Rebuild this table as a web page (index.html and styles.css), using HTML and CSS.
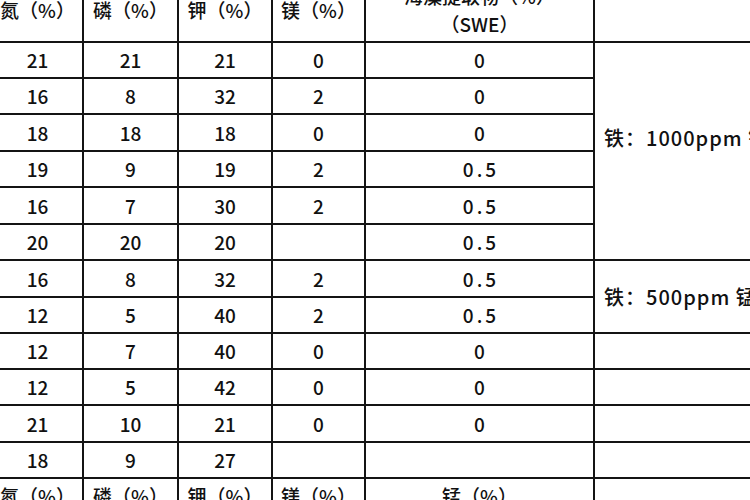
FILE: index.html
```html
<!DOCTYPE html>
<html lang="zh">
<head>
<meta charset="utf-8">
<title>肥料配方表</title>
<link rel="stylesheet" href="styles.css">
</head>
<body>
<div class="sheet">
<table class="grid">
<colgroup><col class="c0"><col class="c1"><col class="c2"><col class="c3"><col class="c4"><col class="c5"></colgroup>
<tr class="head"><th>氮（%）</th><th>磷（%）</th><th>钾（%）</th><th>镁（%）</th><th>海藻提取物（%）<br>（SWE）</th><th></th></tr>
<tr class="h36"><td>21</td><td>21</td><td>21</td><td>0</td><td>0</td><td rowspan="6" class="note note-top">铁：1000ppm 锰</td></tr>
<tr class="h36"><td>16</td><td>8</td><td>32</td><td>2</td><td>0</td></tr>
<tr class="h37"><td>18</td><td>18</td><td>18</td><td>0</td><td>0</td></tr>
<tr class="h36"><td>19</td><td>9</td><td>19</td><td>2</td><td class="dec">0.5</td></tr>
<tr class="h37"><td>16</td><td>7</td><td>30</td><td>2</td><td class="dec">0.5</td></tr>
<tr class="h36"><td>20</td><td>20</td><td>20</td><td></td><td class="dec">0.5</td></tr>
<tr class="h37"><td>16</td><td>8</td><td>32</td><td>2</td><td class="dec">0.5</td><td rowspan="2" class="note">铁：500ppm 锰</td></tr>
<tr class="h36"><td>12</td><td>5</td><td>40</td><td>2</td><td class="dec">0.5</td></tr>
<tr class="h36"><td>12</td><td>7</td><td>40</td><td>0</td><td>0</td><td></td></tr>
<tr class="h36"><td>12</td><td>5</td><td>42</td><td>0</td><td>0</td><td></td></tr>
<tr class="h37"><td>21</td><td>10</td><td>21</td><td>0</td><td>0</td><td></td></tr>
<tr class="h36"><td>18</td><td>9</td><td>27</td><td></td><td></td><td></td></tr>
<tr class="h36 foot"><th>氮（%）</th><th>磷（%）</th><th>钾（%）</th><th>镁（%）</th><th>锰（%）</th><th></th></tr>
</table>
</div>
</body>
</html>
```

FILE: styles.css
```css
html, body {
  margin: 0;
  padding: 0;
  background: #ffffff;
}

.sheet {
  width: 750px;
  height: 500px;
  overflow: hidden;
  background: #ffffff;
}

.grid {
  border-collapse: collapse;
  table-layout: fixed;
  width: 902px;
  margin-left: -9px;
  margin-top: -24px;
  font-family: "Noto Sans CJK SC", "Noto Sans", sans-serif;
  font-size: 19px;
  font-weight: 500;
  color: #111111;
}

.c0 { width: 91px; }
.c1 { width: 95px; }
.c2 { width: 94px; }
.c3 { width: 93px; }
.c4 { width: 229px; }
.c5 { width: 300px; }

.grid th,
.grid td {
  border: 2px solid #141414;
  padding: 0;
  text-align: center;
  vertical-align: middle;
  font-weight: 500;
  white-space: nowrap;
  overflow: hidden;
  line-height: 22px;
}

.head { height: 65px; }
.head th { line-height: 28px; }

.h36 { height: 36px; }
.h37 { height: 37px; }

.dec { letter-spacing: 3px; text-indent: 3px; }

.grid td.note {
  text-align: left;
  padding-left: 9px;
  font-size: 20px;
  letter-spacing: 1px;
  overflow: visible;
}

.grid td.note-top { padding-bottom: 26px; }
```
